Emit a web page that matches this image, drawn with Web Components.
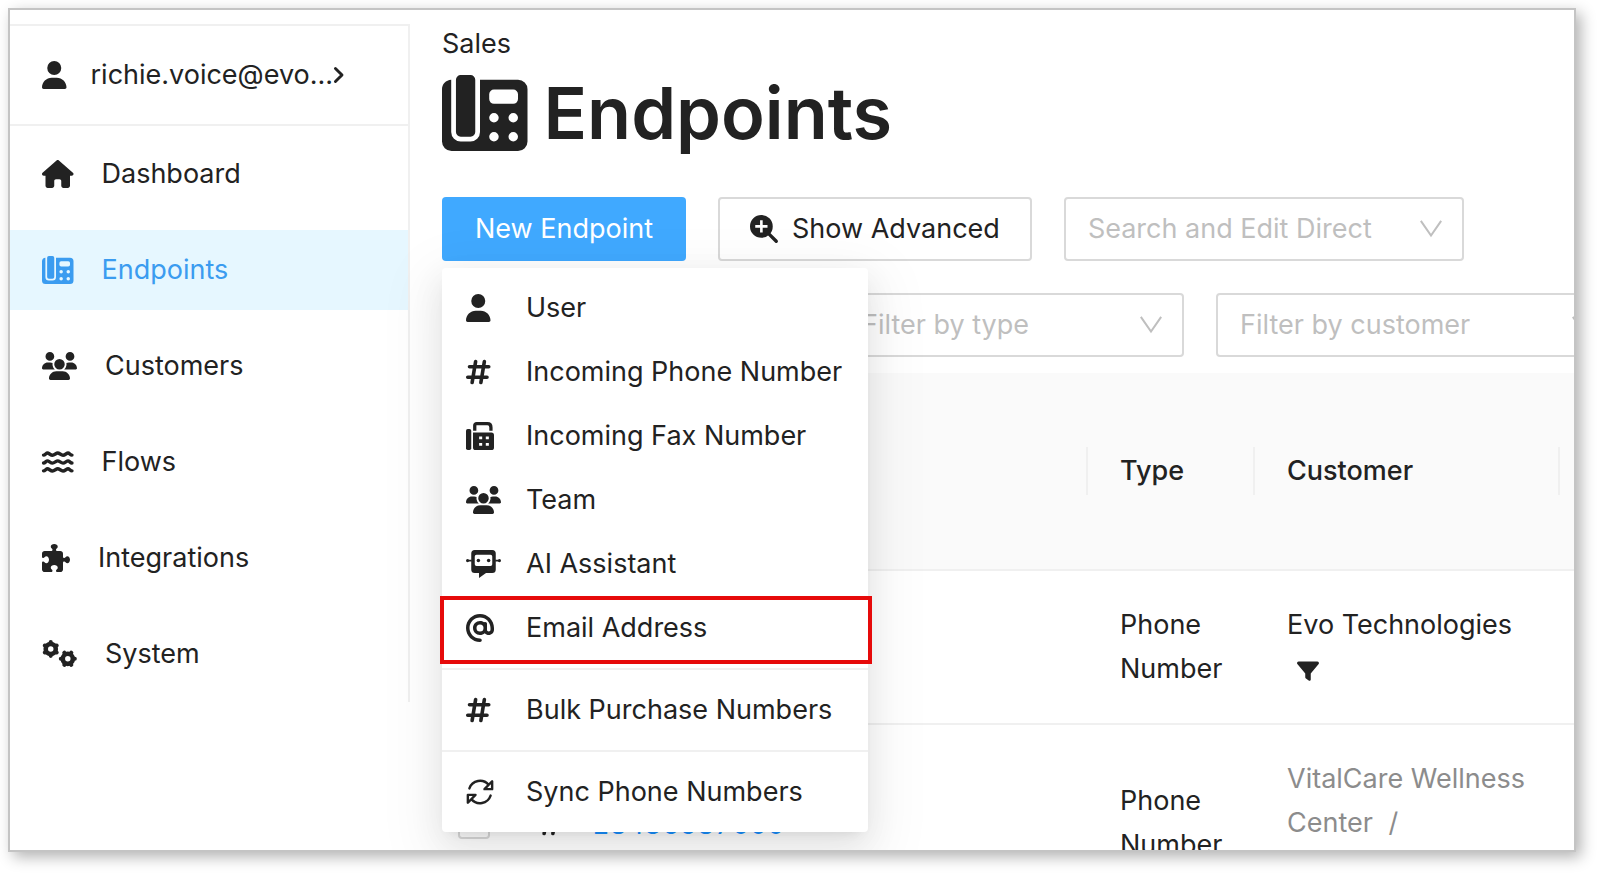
<!DOCTYPE html>
<html lang="en">
<head>
<meta charset="UTF-8">
<meta name="viewport" content="width=device-width, initial-scale=1">
<title>Endpoints</title>
<style>
  body {
    margin: 0;
    background: #fff;
    color: #222;
    font-family: Inter, "Liberation Sans", sans-serif;
    font-size: 27px;
    line-height: 44px;
  }
</style>
</head>
<body>
<app-window>
  <side-nav slot="side">
    <account-link slot="account">richie.voice@evo...</account-link>
    <nav-item icon="house">Dashboard</nav-item>
    <nav-item icon="phone" active>Endpoints</nav-item>
    <nav-item icon="users">Customers</nav-item>
    <nav-item icon="waves">Flows</nav-item>
    <nav-item icon="puzzle">Integrations</nav-item>
    <nav-item icon="gears">System</nav-item>
  </side-nav>
  <page-header section="Sales" icon="phone">Endpoints</page-header>
  <tool-row>
    <drop-menu label="New Endpoint">
      <menu-entry icon="user">User</menu-entry>
      <menu-entry icon="hash">Incoming Phone Number</menu-entry>
      <menu-entry icon="fax">Incoming Fax Number</menu-entry>
      <menu-entry icon="users">Team</menu-entry>
      <menu-entry icon="bot">AI Assistant</menu-entry>
      <menu-entry icon="at" marked>Email Address</menu-entry>
      <menu-entry icon="hash" divided>Bulk Purchase Numbers</menu-entry>
      <menu-entry icon="sync" divided>Sync Phone Numbers</menu-entry>
    </drop-menu>
    <icon-button icon="zoom">Show Advanced</icon-button>
    <pick-list label="Search and Edit Direct" style="--width: 400px"></pick-list>
  </tool-row>
  <tool-row>
    <search-field></search-field>
    <pick-list label="Filter by type" style="--width: 346px"></pick-list>
    <pick-list label="Filter by customer" style="--width: 400px"></pick-list>
  </tool-row>
  <endpoint-table></endpoint-table>
</app-window>

<script>
  // Icons: [viewBox width, markup], all 512 units high
  const ICONS = {
    user: [448, '<path d="M224 256A128 128 0 1 0 224 0a128 128 0 1 0 0 256zM178 304C80 304 0 384 0 482c0 17 13 30 30 30h388c17 0 30-13 30-30 0-98-80-178-178-178z"/>'],
    house: [576, '<path d="M576 256c0 18-15 32-32 32h-32v184c0 22-18 40-40 40h-80c-22 0-40-18-40-40v-88c0-18-14-32-32-32h-64c-18 0-32 14-32 32v88c0 22-18 40-40 40h-80c-22 0-40-18-40-40V288H32c-18 0-32-14-32-32 0-9 3-17 10-24L266 8c7-7 15-8 22-8s15 2 21 7l256 225c8 7 12 15 11 24z"/>'],
    phone: [576, '<path fill-rule="evenodd" d="M62 32C26 34 0 62 0 96v352a64 64 0 0 0 64 64h448a64 64 0 0 0 64-64V96a64 64 0 0 0-64-64H256v352a64 64 0 0 1-64 64h-66a64 64 0 0 1-64-64zM126 0h66a32 32 0 0 1 32 32v352a32 32 0 0 1-32 32h-66a32 32 0 0 1-32-32V32a32 32 0 0 1 32-32zM350 98h130a32 32 0 0 1 32 32v32a32 32 0 0 1-32 32H350a32 32 0 0 1-32-32v-32a32 32 0 0 1 32-32zM318 288a32 32 0 1 0 64 0 32 32 0 1 0-64 0zM448 288a32 32 0 1 0 64 0 32 32 0 1 0-64 0zM318 416a32 32 0 1 0 64 0 32 32 0 1 0-64 0zM448 416a32 32 0 1 0 64 0 32 32 0 1 0-64 0z"/>'],
    users: [640, '<path d="M144 0a80 80 0 1 1 0 160A80 80 0 1 1 144 0zM512 0a80 80 0 1 1 0 160A80 80 0 1 1 512 0zM0 299C0 240 48 192 107 192h42c16 0 31 4 45 10-1 7-2 14-2 22 0 38 17 73 43 96H21c-11 0-21-10-21-21zM405 320c26-23 43-58 43-96 0-8-1-15-2-22 14-6 29-10 45-10h42c59 0 107 48 107 107 0 11-10 21-21 21zM224 224a96 96 0 1 1 192 0 96 96 0 1 1-192 0zM128 485c0-73 60-133 133-133h118c73 0 133 60 133 133 0 15-12 27-27 27H155c-15 0-27-12-27-27z"/>'],
    waves: [576, '<g fill="none" stroke="currentColor" stroke-width="62" stroke-linecap="round"><path d="M28 130C60 130 74 92 100 92s56 40 92 40 66-40 96-40 60 40 96 40 66-40 92-40 40 38 72 38"/><path d="M28 274C60 274 74 236 100 236s56 40 92 40 66-40 96-40 60 40 96 40 66-40 92-40 40 38 72 38"/><path d="M28 418C60 418 74 380 100 380s56 40 92 40 66-40 96-40 60 40 96 40 66-40 92-40 40 38 72 38"/></g>'],
    puzzle: [512, '<path d="M192 105c0-9-6-17-13-23-12-9-19-21-19-34 0-26 29-48 64-48s64 22 64 48c0 13-7 25-19 34-7 6-13 14-13 23 0 13 10 23 23 23h57c26 0 48 22 48 48v57c0 13 10 23 23 23 9 0 17-6 23-13 9-12 21-19 34-19 26 0 48 29 48 64s-22 64-48 64c-13 0-25-7-34-19-6-7-14-13-23-13-13 0-23 10-23 23v121c0 26-22 48-48 48h-57c-13 0-23-10-23-23 0-9 6-17 13-23 12-9 19-21 19-34 0-26-29-48-64-48s-64 22-64 48c0 13 7 25 19 34 7 6 13 14 13 23 0 13-10 23-23 23H48c-26 0-48-22-48-48V343c0-13 10-23 23-23 9 0 17 6 23 13 9 12 21 19 34 19 26 0 48-29 48-64s-22-64-48-64c-13 0-25 7-34 19-6 7-14 13-23 13-13 0-23-10-23-23v-57c0-26 22-48 48-48h121c13 0 23-10 23-23z"/>'],
    gears: [640, '<g fill="none" stroke="currentColor" stroke-linecap="round"><circle cx="160" cy="164" r="92" stroke-width="84"/><path stroke-width="74" d="M160 62V38M249 113l20-12M249 215l20 12M160 266v24M71 215l-20 12M71 113l-20-12"/><circle cx="472" cy="344" r="92" stroke-width="84"/><path stroke-width="74" d="M574 344h26M523 433l13 22M421 433l-13 22M370 344h-26M421 255l-13-22M523 255l13-22"/></g>'],
    hash: [448, '<path fill="none" stroke="currentColor" stroke-width="66" stroke-linecap="round" d="M176 64l-64 384M336 64l-64 384M64 160h352M32 352h352"/>'],
    fax: [512, '<path d="M32 128h32a32 32 0 0 1 32 32v320a32 32 0 0 1-32 32H32a32 32 0 0 1-32-32V160a32 32 0 0 1 32-32z"/><path fill="none" stroke="currentColor" stroke-width="60" d="M160 160V62a32 32 0 0 1 32-32h200c40 0 64 30 64 70v60"/><path fill-rule="evenodd" d="M128 192h336a48 48 0 0 1 48 48v224a48 48 0 0 1-48 48H176a48 48 0 0 1-48-48zM240 264v52h56v-52zM362 264v52h56v-52zM240 382v52h56v-52zM362 382v52h56v-52z"/>'],
    bot: [640, '<path fill-rule="evenodd" d="M160 0h320a64 64 0 0 1 64 64v292a64 64 0 0 1-64 64H366L238 512v-92h-78a64 64 0 0 1-64-64V64a64 64 0 0 1 64-64zM192 88a32 32 0 0 0-32 32v140a32 32 0 0 0 32 32h256a32 32 0 0 0 32-32V120a32 32 0 0 0-32-32z"/><circle cx="226" cy="194" r="32"/><circle cx="414" cy="194" r="32"/><circle cx="28" cy="194" r="28"/><circle cx="612" cy="194" r="28"/><path d="M26 180h80v28H26zM534 180h80v28h-80z"/>'],
    at: [512, '<path d="M256 64C150 64 64 150 64 256s86 192 192 192c18 0 32 14 32 32s-14 32-32 32C115 512 0 397 0 256S115 0 256 0s256 115 256 256v32c0 53-43 96-96 96-29 0-56-13-73-34-23 21-53 34-87 34-71 0-128-57-128-128s57-128 128-128c28 0 54 9 75 24 6-5 13-8 21-8 18 0 32 14 32 32v112c0 18 14 32 32 32s32-14 32-32v-32c0-106-86-192-192-192zm64 192a64 64 0 1 0-128 0 64 64 0 1 0 128 0z"/>'],
    sync: [512, '<g fill="none" stroke="currentColor" stroke-width="44" stroke-linecap="round" stroke-linejoin="round"><path d="M62 190A206 206 0 0 1 414 126M478 60v144H338zM450 322A206 206 0 0 1 98 386M34 452V308h140z"/></g>'],
    zoom: [512, '<path fill="none" stroke="currentColor" stroke-width="62" stroke-linecap="round" d="M340 340l140 140"/><path fill-rule="evenodd" d="M208 0a208 208 0 1 1 0 416 208 208 0 1 1 0-416zM184 96v88H96v48h88v88h48v-88h88v-48h-88V96z"/>'],
    angle: [256, '<path fill="none" stroke="currentColor" stroke-width="62" stroke-linecap="round" stroke-linejoin="round" d="M52 116l140 140L52 396"/>'],
    filter: [512, '<path d="M40 32h432c34 0 52 36 32 62L320 312v142c0 26-28 38-48 24l-64-48c-10-8-16-16-16-28v-90L8 94C-12 68 6 32 40 32z"/>'],
    down: [512, '<path fill="none" stroke="currentColor" stroke-width="40" d="M56 96l200 288L456 96"/>']
  };

  class BaseElement extends HTMLElement {
    constructor() {
      super();
      this.attachShadow({ mode: 'open' });
    }

    connectedCallback() {
      this.shadowRoot.innerHTML = this.template();
    }
  }

  // <svg-icon name="user">, scales with font-size
  class SvgIcon extends BaseElement {
    template() {
      const [width, shape] = ICONS[this.getAttribute('name')];
      return `
        <style>
          :host { display: inline-flex; flex: none; font-size: 28px; }
          svg { display: block; height: 1em; fill: currentColor; overflow: visible; }
        </style>
        <svg viewBox="0 0 ${width} 512" aria-hidden="true">${shape}</svg>
      `;
    }
  }

  class AppWindow extends BaseElement {
    template() {
      return `
        <style>
          :host {
            display: flex;
            box-sizing: border-box;
            height: 100vh;
            padding: 8px 24px 24px 8px;
            overflow: hidden;
          }
          .frame {
            display: flex;
            flex: 1;
            align-items: flex-start;
            min-width: 0;
            overflow: hidden;
            border: 2px solid #c4c4c4;
            background: #fff;
            box-shadow: 5px 5px 14px rgba(0, 0, 0, 0.3);
          }
          .side { flex: none; width: 400px; padding-top: 14px; }
          main {
            flex: 1;
            min-width: 0;
            padding: 12px 0 0 32px;
          }
        </style>
        <div class="frame">
          <div class="side"><slot name="side"></slot></div>
          <main><slot></slot></main>
        </div>
      `;
    }
  }

  class SideNav extends BaseElement {
    template() {
      return `
        <style>
          :host {
            display: block;
            border-top: 2px solid #f0f0f0;
            border-right: 2px solid #f0f0f0;
          }
          nav {
            display: flex;
            flex-direction: column;
            gap: 16px;
            padding: 8px 0;
            border-top: 2px solid #f0f0f0;
          }
        </style>
        <slot name="account"></slot>
        <nav><slot></slot></nav>
      `;
    }
  }

  class AccountLink extends BaseElement {
    template() {
      return `
        <style>
          :host { display: block; }
          a {
            display: flex;
            align-items: center;
            height: 98px;
            padding-left: 32px;
            color: inherit;
            text-decoration: none;
          }
          .name { margin-left: 24px; }
          .angle { font-size: 24px; }
        </style>
        <a href="#account">
          <svg-icon name="user"></svg-icon>
          <span class="name"><slot></slot></span>
          <svg-icon class="angle" name="angle"></svg-icon>
        </a>
      `;
    }
  }

  class NavItem extends BaseElement {
    template() {
      return `
        <style>
          :host { display: block; }
          :host([active]) { background: #e6f7ff; color: #3b9cf0; }
          a {
            display: flex;
            align-items: center;
            gap: 28px;
            height: 80px;
            padding-left: 32px;
            color: inherit;
            text-decoration: none;
          }
        </style>
        <a href="#"><svg-icon name="${this.getAttribute('icon')}"></svg-icon><span><slot></slot></span></a>
      `;
    }
  }

  class PageHeader extends BaseElement {
    template() {
      return `
        <style>
          :host { display: block; }
          h1 {
            display: flex;
            align-items: center;
            gap: 16px;
            margin: 0 0 38px;
            font-size: 72px;
            font-weight: 600;
            line-height: 93px;
          }
          svg-icon { font-size: 76px; }
        </style>
        <div>${this.getAttribute('section')}</div>
        <h1><svg-icon name="${this.getAttribute('icon')}"></svg-icon><span><slot></slot></span></h1>
      `;
    }
  }

  class ToolRow extends BaseElement {
    template() {
      return `
        <style>
          :host { display: flex; gap: 32px; margin-bottom: 32px; }
          :host(:last-of-type) { margin-bottom: 16px; }
        </style>
        <slot></slot>
      `;
    }
  }

  class IconButton extends BaseElement {
    template() {
      return `
        <style>
          :host { display: block; flex: none; }
          button {
            display: flex;
            align-items: center;
            gap: 14px;
            height: 64px;
            padding: 0 30px;
            border: 2px solid #d9d9d9;
            border-radius: 4px;
            background: #fff;
            color: inherit;
            font: inherit;
          }
        </style>
        <button type="button"><svg-icon name="${this.getAttribute('icon')}"></svg-icon><slot></slot></button>
      `;
    }
  }

  class PickList extends BaseElement {
    template() {
      const label = this.getAttribute('label');
      return `
        <style>
          :host {
            display: grid;
            flex: none;
            align-items: center;
            width: var(--width);
            color: #bfbfbf;
          }
          select, svg-icon { grid-area: 1 / 1; }
          select {
            width: 100%;
            height: 64px;
            padding: 0 64px 0 22px;
            border: 2px solid #d9d9d9;
            border-radius: 4px;
            background: #fff;
            color: inherit;
            font: inherit;
            appearance: none;
          }
          svg-icon {
            justify-self: end;
            margin-right: 20px;
            font-size: 26px;
            pointer-events: none;
          }
        </style>
        <select aria-label="${label}"><option>${label}</option></select>
        <svg-icon name="down"></svg-icon>
      `;
    }
  }

  class SearchField extends BaseElement {
    template() {
      return `
        <style>
          :host { display: block; flex: none; width: 364px; }
          input {
            box-sizing: border-box;
            width: 100%;
            height: 64px;
            padding: 0 22px;
            border: 2px solid #d9d9d9;
            border-radius: 4px;
            font: inherit;
          }
        </style>
        <input type="search" aria-label="Search">
      `;
    }
  }

  class DropMenu extends BaseElement {
    template() {
      return `
        <style>
          :host { display: block; flex: none; position: relative; }
          button {
            display: block;
            height: 64px;
            padding: 0 33px;
            border: 0;
            border-radius: 4px;
            background: #40a9ff;
            color: #fff;
            font: inherit;
          }
          .menu {
            position: absolute;
            z-index: 1;
            top: calc(100% + 7px);
            left: 0;
            width: 426px;
            padding: 8px 0;
            border-radius: 4px;
            background: #fff;
            box-shadow: 0 6px 12px -8px rgba(0, 0, 0, 0.12),
              0 12px 32px rgba(0, 0, 0, 0.08),
              0 16px 56px 16px rgba(0, 0, 0, 0.05);
          }
        </style>
        <button type="button" aria-haspopup="menu" aria-expanded="true">${this.getAttribute('label')}</button>
        <div class="menu" role="menu"><slot></slot></div>
      `;
    }
  }

  class MenuEntry extends BaseElement {
    template() {
      return `
        <style>
          :host { display: block; position: relative; }
          :host([divided]) {
            margin-top: 8px;
            padding-top: 8px;
            border-top: 2px solid #f0f0f0;
          }
          :host([marked])::after {
            content: "";
            position: absolute;
            inset: 0 -4px -4px -2px;
            border: 4px solid #e60a0a;
          }
          button {
            display: grid;
            grid-template-columns: 60px auto;
            align-items: center;
            justify-content: start;
            width: 100%;
            height: 64px;
            padding: 0 0 0 24px;
            border: 0;
            background: none;
            color: inherit;
            font: inherit;
            text-align: left;
            white-space: nowrap;
          }
        </style>
        <button type="button" role="menuitem"><svg-icon name="${this.getAttribute('icon')}"></svg-icon><span><slot></slot></span></button>
      `;
    }
  }

  class EndpointTable extends BaseElement {
    template() {
      return `
        <style>
          :host { display: block; }
          table {
            width: 100%;
            table-layout: fixed;
            border-spacing: 0;
          }
          .check { width: 64px; }
          .type { width: 167px; }
          .customer { width: 305px; }
          .more { width: 14px; }
          th {
            position: relative;
            height: 196px;
            padding: 0 32px;
            background: #fafafa;
            border-bottom: 2px solid #f0f0f0;
            font-weight: 500;
            text-align: left;
          }
          th.split::after {
            content: "";
            position: absolute;
            top: 74px;
            right: 0;
            width: 2px;
            height: 48px;
            background: #f0f0f0;
          }
          td {
            padding: 32px;
            border-bottom: 2px solid #f0f0f0;
          }
          td.pick { padding: 0 16px; }
          td.end, th.end { padding: 0; }
          .muted { color: #8c8c8c; }
          .number { display: flex; align-items: center; gap: 12px; }
          .number a {
            padding-top: 4px;
            color: #1890ff;
            font-variant-numeric: tabular-nums;
            text-decoration: none;
          }
          .filter {
            margin-left: 10px;
            font-size: 22px;
            vertical-align: -4px;
          }
          .slash { margin-left: 8px; }
          input {
            display: block;
            box-sizing: border-box;
            width: 32px;
            height: 32px;
            margin: 0;
            border: 2px solid #d9d9d9;
            border-radius: 4px;
            background: #fff;
            appearance: none;
          }
        </style>
        <table>
          <colgroup>
            <col class="check"><col><col class="type"><col class="customer"><col class="more">
          </colgroup>
          <thead>
            <tr>
              <th class="end"></th>
              <th class="split"></th>
              <th class="split">Type</th>
              <th class="split">Customer</th>
              <th class="end"></th>
            </tr>
          </thead>
          <tbody>
            <tr>
              <td class="pick"><input type="checkbox" aria-label="Select row"></td>
              <td></td>
              <td>Phone Number</td>
              <td>Evo&nbsp;Technologies<br><svg-icon class="filter" name="filter"></svg-icon></td>
              <td class="end"></td>
            </tr>
            <tr>
              <td class="pick"><input type="checkbox" aria-label="Select row"></td>
              <td><div class="number"><svg-icon name="hash"></svg-icon><a href="#">+18436587000</a></div></td>
              <td>Phone Number</td>
              <td class="muted">VitalCare&nbsp;Wellness<br>Center <span class="slash">/</span><br>&nbsp;</td>
              <td class="end"></td>
            </tr>
          </tbody>
        </table>
      `;
    }
  }

  customElements.define('svg-icon', SvgIcon);
  customElements.define('app-window', AppWindow);
  customElements.define('side-nav', SideNav);
  customElements.define('account-link', AccountLink);
  customElements.define('nav-item', NavItem);
  customElements.define('page-header', PageHeader);
  customElements.define('tool-row', ToolRow);
  customElements.define('icon-button', IconButton);
  customElements.define('pick-list', PickList);
  customElements.define('search-field', SearchField);
  customElements.define('drop-menu', DropMenu);
  customElements.define('menu-entry', MenuEntry);
  customElements.define('endpoint-table', EndpointTable);
</script>
</body>
</html>
